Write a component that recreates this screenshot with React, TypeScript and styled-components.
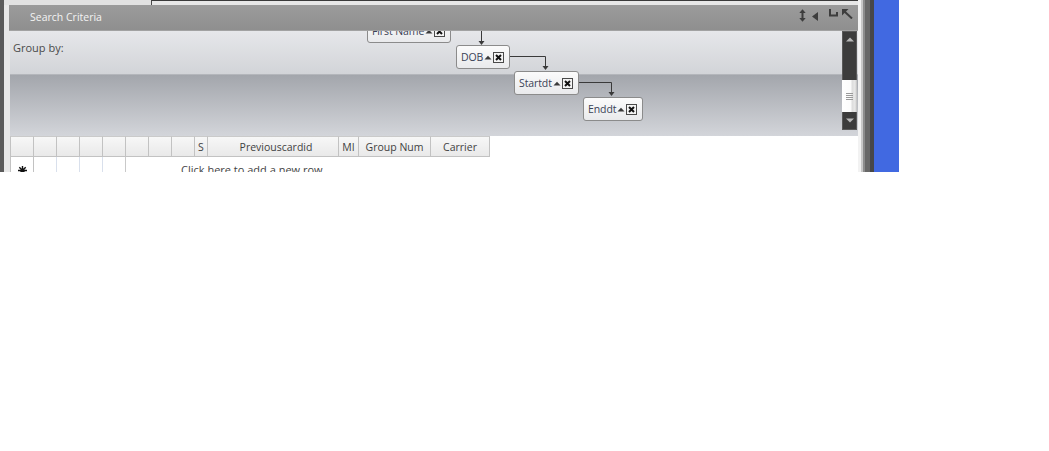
import React from "react";
import styled, { createGlobalStyle } from "styled-components";

const GlobalStyle = createGlobalStyle`
  html, body { margin: 0; padding: 0; background: #ffffff; }
  body { font-family: "Open Sans", "Noto Sans", "DejaVu Sans", sans-serif; font-size: 11px; }
`;

const Screen = styled.div`
  display: flex;
  width: 899px;
  height: 172px;
  overflow: hidden;
`;

const OuterEdge = styled.div`
  flex: none;
  width: 4px;
  background: #5b5b5b;
`;

const Window = styled.div`
  flex: none;
  width: 854px;
  display: flex;
  flex-direction: column;
  background: #e8e8e8;
`;

const TopStrip = styled.div`
  flex: none;
  height: 5px;
  display: flex;
`;

const TabFace = styled.div`
  width: 147px;
  background: #e2e2e2;
`;

const TabRest = styled.div`
  flex: 1;
  background: #e7e7e7;
  border-top: 1px solid #3a3a3a;
  border-left: 1px solid #4a4a4a;
`;

const WindowBody = styled.div`
  flex: 1;
  display: flex;
  flex-direction: column;
  padding-left: 5px;
`;

const TitleBar = styled.div`
  flex: none;
  height: 26px;
  box-sizing: border-box;
  display: flex;
  align-items: center;
  padding: 0 5px 2px 21px;
  background: linear-gradient(#9b9b9b, #8f8f8f);
  border-bottom: 1px solid #a2a2a2;
  color: #f3f3f3;
  font-size: 10.5px;
`;

const TitleText = styled.span`
  flex: 1;
`;

const TitleTools = styled.div`
  display: flex;
  align-items: flex-start;
  align-self: stretch;
  padding-top: 4px;
  color: #3d3d3d;
`;

const ToolIcon = styled.svg<{ $gap: number; $top?: number }>`
  display: block;
  margin-left: ${(p) => p.$gap}px;
  margin-top: ${(p) => p.$top ?? 0}px;
`;

const Panel = styled.div`
  flex: none;
  height: 105px;
  margin-left: 1px;
  display: flex;
  background: linear-gradient(
    to bottom,
    #e6e7ea 0px,
    #d2d4d8 43px,
    #c4c6ca 43px,
    #a3a6ac 44px,
    #d3d5da 105px
  );
`;

const GroupArea = styled.div`
  flex: 1;
  position: relative;
  overflow: hidden;
`;

const GroupLabel = styled.div`
  padding: 10px 0 0 3px;
  line-height: 14px;
  color: #4a4a4a;
`;

const Connectors = styled.svg`
  position: absolute;
  left: 0;
  top: 0;
  width: 100%;
  height: 100%;
  pointer-events: none;
`;

const Chip = styled.div`
  position: absolute;
  display: flex;
  align-items: center;
  height: 24px;
  box-sizing: border-box;
  padding: 0 5px 0 4px;
  border: 1px solid #8b8b8b;
  border-radius: 3px;
  background: linear-gradient(#fbfbfb, #e9eaec);
  color: #3a4256;
  font-size: 10.5px;
  letter-spacing: -0.1px;
  white-space: nowrap;
`;

const SortGlyph = styled.svg`
  display: block;
  margin-left: 1px;
`;

const CloseGlyph = styled.svg`
  display: block;
  margin-left: 1px;
`;

const ScrollBar = styled.div`
  flex: none;
  width: 15px;
  height: 99px;
  margin-right: 1px;
  box-sizing: border-box;
  border: 1px solid #595959;
  background: #3c3c3c;
  display: flex;
  flex-direction: column;
`;

const ScrollTrack = styled.div`
  flex: 1;
  display: flex;
  justify-content: center;
  padding-top: 5px;
`;

const ScrollThumb = styled.div`
  flex: none;
  height: 32px;
  margin: 0 -1px;
  display: flex;
  align-items: center;
  justify-content: center;
  background: linear-gradient(to right, #ffffff 0, #fbfbfb 9px, #dcdcdc 10px, #e8e8e8 13px, #bdbdbd 15px);
`;

const ScrollButton = styled.div`
  flex: none;
  height: 17px;
  display: flex;
  align-items: center;
  justify-content: center;
`;

const Grid = styled.div`
  flex: 1;
  margin-left: 1px;
  background: #ffffff;
`;

const HeaderRow = styled.div`
  display: flex;
  height: 21px;
`;

const HeaderCell = styled.div<{ $w: number; $first?: boolean; $pl?: number }>`
  flex: none;
  width: ${(p) => p.$w}px;
  box-sizing: border-box;
  border-top: 1px solid #cacaca;
  border-bottom: 1px solid #c2c2c2;
  border-right: 1px solid #c2c2c2;
  border-left: ${(p) => (p.$first ? "1px solid #c2c2c2" : "none")};
  background: linear-gradient(#f7f7f7, #e9e9e9);
  color: #3f3f3f;
  font-size: 10.5px;
  text-align: center;
  line-height: 20px;
  padding-left: ${(p) => p.$pl ?? 0}px;
  white-space: nowrap;
  overflow: hidden;
`;

const DataRow = styled.div`
  display: flex;
  height: 26px;
`;

const RowIndicator = styled.div`
  flex: none;
  width: 24px;
  box-sizing: border-box;
  border-left: 1px solid #c2c2c2;
  border-right: 1px solid #c2c2c2;
  display: flex;
  align-items: center;
  justify-content: center;
`;

const DataCell = styled.div<{ $edge?: boolean }>`
  flex: none;
  width: 23px;
  box-sizing: border-box;
  border-right: 1px solid ${(p) => (p.$edge ? "#c9c9c9" : "#d9e0ec")};
`;

const NewRowText = styled.div`
  padding-left: 55px;
  line-height: 26px;
  color: #444444;
`;

const RightFrame = styled.div`
  flex: none;
  width: 16px;
  background: linear-gradient(
    to right,
    #f2f2f2 0px,
    #f2f2f2 3px,
    #c8c8c8 3px,
    #c8c8c8 5px,
    #8c8c8c 5px,
    #8c8c8c 7px,
    #686868 7px,
    #686868 12px,
    #474747 12px,
    #474747 16px
  );
`;

const Desktop = styled.div`
  flex: none;
  width: 25px;
  background: #4169e1;
`;

type ChipData = { label: string; left: number; top: number };

const chips: ChipData[] = [
  { label: "First Name", left: 357, top: -12 },
  { label: "DOB", left: 446, top: 14 },
  { label: "Startdt", left: 504, top: 40 },
  { label: "Enddt", left: 573, top: 66 },
];

const columns: { label: string; w: number; pl?: number }[] = [
  { label: "", w: 24 },
  { label: "", w: 23 },
  { label: "", w: 23 },
  { label: "", w: 23 },
  { label: "", w: 23 },
  { label: "", w: 23 },
  { label: "", w: 23 },
  { label: "", w: 23 },
  { label: "S", w: 13 },
  { label: "Previouscardid", w: 131, pl: 6 },
  { label: "MI", w: 20 },
  { label: "Group Num", w: 72 },
  { label: "Carrier", w: 59 },
];

const GroupChip: React.FC<ChipData> = ({ label, left, top }) => (
  <Chip style={{ left, top }}>
    <span>{label}</span>
    <SortGlyph width="8" height="5" viewBox="0 0 8 5">
      <polygon points="0.5,4.5 4,0.8 7.5,4.5" fill="#3a3a3a" />
    </SortGlyph>
    <CloseGlyph width="11" height="11" viewBox="0 0 11 11">
      <rect x="0.5" y="0.5" width="10" height="10" fill="#f4f4f4" stroke="#4a4a4a" />
      <path d="M3 3 L8 8 M8 3 L3 8" stroke="#111" strokeWidth="2" />
    </CloseGlyph>
  </Chip>
);

const Arrow: React.FC<{ x: number; y: number }> = ({ x, y }) => (
  <polygon points={`${x - 3},${y - 4} ${x + 3},${y - 4} ${x},${y}`} fill="#3a3a3a" />
);

export default function App() {
  return (
    <>
      <GlobalStyle />
      <Screen>
        <OuterEdge />
        <Window>
          <TopStrip>
            <TabFace />
            <TabRest />
          </TopStrip>
          <WindowBody>
            <TitleBar>
              <TitleText>Search Criteria</TitleText>
              <TitleTools>
                <ToolIcon $gap={0} width="7" height="13" viewBox="0 0 7 13">
                  <path d="M3.5 2 V11" stroke="currentColor" strokeWidth="2" />
                  <polygon points="0.3,4 3.5,0.3 6.7,4" fill="currentColor" />
                  <polygon points="0.3,9 3.5,12.7 6.7,9" fill="currentColor" />
                </ToolIcon>
                <ToolIcon $gap={6} $top={3} width="6" height="9" viewBox="0 0 6 9">
                  <polygon points="0,4.5 6,0 6,9" fill="currentColor" />
                </ToolIcon>
                <ToolIcon $gap={11} width="10" height="8" viewBox="0 0 10 8">
                  <path d="M1 0 V6.5 H8 V3" stroke="currentColor" strokeWidth="2" fill="none" />
                </ToolIcon>
                <ToolIcon $gap={3} width="11" height="10" viewBox="0 0 11 10">
                  <path d="M2.5 2.5 L10 9.5" stroke="currentColor" strokeWidth="2" />
                  <polygon points="0,0 6.5,0 0,6.5" fill="currentColor" />
                </ToolIcon>
              </TitleTools>
            </TitleBar>
            <Panel>
              <GroupArea>
                <GroupLabel>Group by:</GroupLabel>
                <Connectors>
                  <path d="M471.5 0 V10" stroke="#3a3a3a" strokeWidth="1" fill="none" />
                  <Arrow x={471.5} y={14} />
                  <path d="M498 25.5 H535.5 V35" stroke="#3a3a3a" strokeWidth="1" fill="none" />
                  <Arrow x={535.5} y={39} />
                  <path d="M568 51.5 H601.5 V61" stroke="#3a3a3a" strokeWidth="1" fill="none" />
                  <Arrow x={601.5} y={65} />
                </Connectors>
                {chips.map((c) => (
                  <GroupChip key={c.label} {...c} />
                ))}
              </GroupArea>
              <ScrollBar>
                <ScrollTrack>
                  <svg width="8" height="5" viewBox="0 0 8 5">
                    <polygon points="0,4.5 4,0.5 8,4.5" fill="#b8b8b8" />
                  </svg>
                </ScrollTrack>
                <ScrollThumb>
                  <svg width="8" height="9" viewBox="0 0 8 9">
                    <path d="M0 1.5 H7 M0 3.5 H7 M0 5.5 H7 M0 7.5 H7" stroke="#9a9a9a" strokeWidth="1" />
                  </svg>
                </ScrollThumb>
                <ScrollButton>
                  <svg width="8" height="5" viewBox="0 0 8 5">
                    <polygon points="0,0.5 8,0.5 4,4.5" fill="#b8b8b8" />
                  </svg>
                </ScrollButton>
              </ScrollBar>
            </Panel>
            <Grid>
              <HeaderRow>
                {columns.map((c, i) => (
                  <HeaderCell key={i} $w={c.w} $first={i === 0} $pl={c.pl}>
                    {c.label}
                  </HeaderCell>
                ))}
              </HeaderRow>
              <DataRow>
                <RowIndicator>
                  <svg width="9" height="9" viewBox="0 0 9 9">
                    <path
                      d="M4.5 0 V9 M0 4.5 H9 M1.3 1.3 L7.7 7.7 M7.7 1.3 L1.3 7.7"
                      stroke="#111"
                      strokeWidth="1.4"
                    />
                  </svg>
                </RowIndicator>
                <DataCell />
                <DataCell />
                <DataCell />
                <DataCell $edge />
                <NewRowText>Click here to add a new row.</NewRowText>
              </DataRow>
            </Grid>
          </WindowBody>
        </Window>
        <RightFrame />
        <Desktop />
      </Screen>
    </>
  );
}
